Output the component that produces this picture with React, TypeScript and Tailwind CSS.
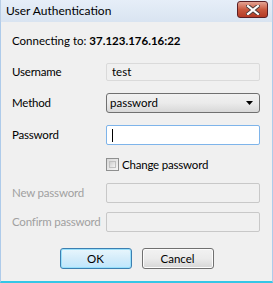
import React from "react";

const font = { fontFamily: 'Lato, "Noto Sans", sans-serif' };

function Row({ label, disabled, children, className }: { label: string; disabled?: boolean; children: React.ReactNode; className?: string }) {
  return (
    <div className={"flex items-center " + (className ?? "")}>
      <div className={"w-[105px] pl-[11px] text-[11.5px] tracking-[-0.2px] leading-none whitespace-nowrap " + (disabled ? "text-[#a0a0a0]" : "text-[#000]")}>{label}</div>
      {children}
    </div>
  );
}

export default function App() {
  return (
    <div className="w-[273px] h-[283px] flex flex-col bg-[#dfe8f3] overflow-hidden" style={font}>
      <div className="h-[22px] flex items-center justify-between bg-gradient-to-b from-[#e6eef8] to-[#d9e4f1] border-l border-r border-[#b8cde6]">
        <span className="pl-[5px] text-[12px] text-[#000] leading-none">User Authentication</span>
        <div className="mr-[4px] mt-[-3px] w-[31px] h-[17px] rounded-[3px] border border-[#5b1f24] bg-gradient-to-b from-[#e3a293] via-[#c9593f] to-[#b43a25] flex items-center justify-center">
          <svg width="14" height="10" viewBox="0 0 14 10">
            <path d="M2 1 L12 9 M12 1 L2 9" stroke="#4a3a3a" strokeWidth="4" strokeLinecap="square" />
            <path d="M2 1 L12 9 M12 1 L2 9" stroke="#ffffff" strokeWidth="2.2" strokeLinecap="square" />
          </svg>
        </div>
      </div>
      <div className="flex-1 flex flex-col bg-[#f0f0f0] border-l border-r border-[#aecbea] border-b-[2px] border-b-[#34c6e6]">
        <div className="mt-[11px] h-[16px] flex items-center pl-[11px] text-[11.5px] text-[#000] whitespace-nowrap">
          <span>Connecting to:&nbsp;</span>
          <span className="font-bold">37.123.176.16:22</span>
        </div>
        <Row label="Username" className="mt-[14px] h-[18px]">
          <div className="w-[154px] h-[18px] border border-[#dadada] bg-[#f0f0f0] rounded-[2px] flex items-center pl-[5px] text-[11.5px] text-[#000]">test</div>
        </Row>
        <Row label="Method" className="mt-[12px] h-[20px]">
          <div className="w-[154px] h-[20px] border border-[#707070] rounded-[3px] bg-gradient-to-b from-[#f2f2f2] via-[#ebebeb] to-[#d8d8d8] flex items-center justify-between pl-[3px] pr-[5px] text-[11.5px] text-[#000]">
            <span>password</span>
            <svg width="8" height="5" viewBox="0 0 8 5"><path d="M0 0 H7 L3.5 4 Z" fill="#000" /></svg>
          </div>
        </Row>
        <Row label="Password" className="mt-[12px] h-[20px]">
          <div className="w-[154px] h-[20px] border border-[#7eb4ea] bg-white rounded-[2px] flex items-center pl-[5px]">
            <div className="w-[1px] h-[13px] bg-black" />
          </div>
        </Row>
        <div className="mt-[13px] h-[13px] flex items-center pl-[105px]">
          <div className="w-[13px] h-[13px] border border-[#8e8f8f] bg-gradient-to-br from-[#d8d8d8] to-[#f6f6f6] p-[2px]">
            <div className="w-full h-full border border-[#c0c0c0] bg-gradient-to-br from-[#cfcfcf] to-[#f4f4f4]" />
          </div>
          <span className="ml-[3px] text-[11.5px] tracking-[-0.2px] text-[#000] leading-none whitespace-nowrap">Change password</span>
        </div>
        <Row label="New password" disabled className="mt-[12px] h-[20px]">
          <div className="w-[154px] h-[20px] border border-[#c8c8c8] bg-[#f0f0f0] rounded-[2px]" />
        </Row>
        <Row label="Confirm password" disabled className="mt-[9px] h-[20px]">
          <div className="w-[154px] h-[20px] border border-[#c8c8c8] bg-[#f0f0f0] rounded-[2px]" />
        </Row>
        <div className="mt-[16px] flex justify-center gap-[10px]">
          <div className="w-[72px] h-[21px] rounded-[3px] border border-[#3c7fb1] bg-gradient-to-b from-[#e8f6fd] via-[#d4ecfa] to-[#bee6fd] flex items-center justify-center text-[11.5px] text-[#000] shadow-[inset_0_0_0_1px_#98e0fb]">OK</div>
          <div className="w-[72px] h-[21px] rounded-[3px] border border-[#707070] bg-gradient-to-b from-[#f2f2f2] via-[#ebebeb] to-[#d6d6d6] flex items-center justify-center text-[11.5px] text-[#000] shadow-[inset_0_0_0_1px_#fcfcfc]">Cancel</div>
        </div>
      </div>
    </div>
  );
}
